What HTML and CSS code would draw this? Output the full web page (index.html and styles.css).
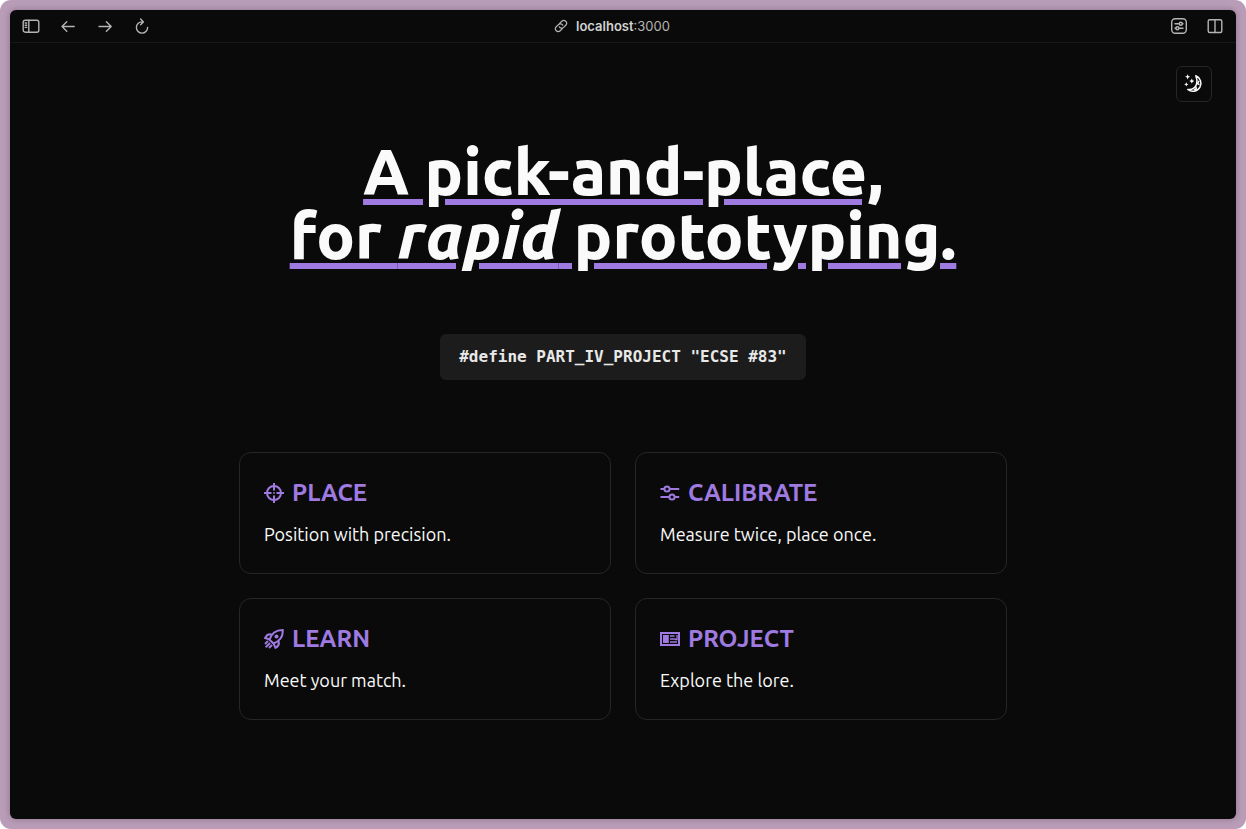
FILE: index.html
```html
<!DOCTYPE html>
<html lang="en">
<head>
<meta charset="utf-8">
<meta name="viewport" content="width=device-width, initial-scale=1">
<title>A pick-and-place, for rapid prototyping.</title>
<link rel="stylesheet" href="styles.css">
</head>
<body>
<div class="window">
  <header class="toolbar">
    <div class="tools">
      <button class="tool" type="button" aria-label="Sidebar">
        <svg width="18" height="18" viewBox="0 0 18 18"><rect x="1.2" y="3.200" width="15.6" height="12" rx="2"/><path d="M6.8 3.200v12M3.200 6h1.500M3.200 8.200h1.500M3.200 10.400h1.500"/></svg>
      </button>
      <button class="tool" type="button" aria-label="Back">
        <svg width="18" height="18" viewBox="0 0 18 18"><path d="M15.200 9.500H3M7.800 4.700 3 9.500l4.800 4.800"/></svg>
      </button>
      <button class="tool" type="button" aria-label="Forward">
        <svg width="18" height="18" viewBox="0 0 18 18"><path d="M3 9.500h12.200M10.400 4.700 15.200 9.500l-4.800 4.800"/></svg>
      </button>
      <button class="tool" type="button" aria-label="Reload">
        <svg width="18" height="18" viewBox="0 0 18 18"><path d="M9.800 4.900H9a5.600 5.600 0 1 0 5.600 5.600M7.600 2 10.400 4.900 7.600 7.700"/></svg>
      </button>
    </div>
    <div class="address">
      <svg width="14" height="14" viewBox="0 0 14 14"><g transform="rotate(-45 7 7)"><path d="M6.500 9.800H3.100a2.800 2.800 0 0 1 0-5.600h3a2.800 2.800 0 0 1 2.700 3.400M7.500 4.200h3.400a2.800 2.800 0 0 1 0 5.600h-3a2.800 2.800 0 0 1-2.700-3.400"/></g></svg>
      <span><b>localhost</b>:3000</span>
    </div>
    <div class="tools tools-end">
      <button class="tool" type="button" aria-label="Page settings">
        <svg width="18" height="18" viewBox="0 0 18 18"><rect x="1.700" y="1.700" width="14.600" height="14.600" rx="3.500"/><path d="M5 6.800h4.200M12.400 6.800H13M5 11.200h.8M9 11.200h4"/><circle cx="10.800" cy="6.800" r="1.500"/><circle cx="7.400" cy="11.200" r="1.500"/></svg>
      </button>
      <button class="tool" type="button" aria-label="Split view">
        <svg width="18" height="18" viewBox="0 0 18 18"><rect x="2.200" y="2.700" width="13.600" height="12.800" rx="1.500"/><path d="M9 2.700v12.800"/></svg>
      </button>
    </div>
  </header>

  <main class="page">
    <div class="topbar">
      <button class="theme" type="button" aria-label="Toggle theme">
        <svg width="20" height="20" viewBox="0 0 20 20">
          <path class="line" d="M11.800 1.800A8 8 0 1 1 3.800 15.400C8 16.200 11.600 13.800 12.600 10c.7-2.800.4-5.600-.8-8.200Z"/>
          <path class="line" d="M15 6.800l-1.500 2.700 2 1.200M11.800 12.500l.5 2.500-2.500.7"/>
          <path class="solid" d="M3.600 .2l.8 1.800 1.800.8-1.800.8L3.600 5.400l-.8-1.800-1.800-.8 1.800-.8ZM7.800 4.600l.8 1.700 1.700.8-1.700.8-.8 1.700-.8-1.700-1.700-.8 1.700-.8ZM2.300 8.200l.7 1.500 1.500.7-1.500.7-.7 1.500-.7-1.500-1.500-.7 1.500-.7Z"/>
        </svg>
      </button>
    </div>
    <h1 class="headline">A pick-and-place,<br>for <em>rapid</em> prototyping.</h1>
    <code class="define">#define PART_IV_PROJECT "ECSE #83"</code>
    <nav class="cards">
      <a class="card" href="#place">
        <h2 class="card-title">
          <svg width="20" height="20" viewBox="0 0 20 20"><circle cx="10" cy="10" r="7"/><path d="M10 0v7.500M10 12.500V20M0 10h7.500M12.500 10H20"/><circle class="solid" cx="10" cy="10" r=".9"/></svg>
          PLACE
        </h2>
        <p class="card-text">Position with precision.</p>
      </a>
      <a class="card" href="#calibrate">
        <h2 class="card-title">
          <svg width="20" height="20" viewBox="0 0 20 20"><path d="M.5 6h4M9.500 6h9.700M.5 14h9M14.500 14h4.700"/><circle cx="7" cy="6" r="2.600"/><circle cx="12" cy="14" r="2.600"/></svg>
          CALIBRATE
        </h2>
        <p class="card-text">Measure twice, place once.</p>
      </a>
      <a class="card" href="#learn">
        <h2 class="card-title">
          <svg width="20" height="20" viewBox="0 0 20 20"><path d="M5.500 10.800C7 5.500 11.500 1.200 18.700 1.100 19.300 8 14.500 12.500 9.500 14.500ZM7.700 5.500C4.500 4.500 2.500 6 1.200 9L5.800 10.500M14.500 12C15.500 15 14 17.500 11.500 18.800L9.500 14.500M4 12 1 15M6 14 1.700 18.300M8 16 5 19"/><circle class="solid" cx="12.500" cy="7.500" r="2"/></svg>
          LEARN
        </h2>
        <p class="card-text">Meet your match.</p>
      </a>
      <a class="card" href="#project">
        <h2 class="card-title">
          <svg width="20" height="20" viewBox="0 0 20 20"><rect x="1" y="4" width="18" height="12"/><path class="solid" d="M3 6h5.800v8H3Z"/><path class="thin" d="M10 7h4.500M10 10h5.500M10 13h7M17 6v4.500h-2"/></svg>
          PROJECT
        </h2>
        <p class="card-text">Explore the lore.</p>
      </a>
    </nav>
  </main>
</div>
</body>
</html>
```
FILE: styles.css
```css
* {
  box-sizing: border-box;
}

html {
  min-height: 100%;
  background: #fff;
}

body {
  margin: 0;
  min-height: 100vh;
  display: flex;
  padding: 10px;
  border-radius: 11px;
  background: #b99db8;
  color: #fafafa;
  font-family: Ubuntu, "Noto Sans", sans-serif;
}

.window {
  flex: 1;
  display: flex;
  flex-direction: column;
  border-radius: 6px;
  background: #0a0a0a;
  box-shadow: 0 0 6px rgba(40, 10, 40, 0.3);
}

.toolbar {
  display: grid;
  grid-template-columns: 1fr auto 1fr;
  align-items: center;
  height: 33px;
  padding: 0 12px;
  border-bottom: 1px solid #171717;
  color: #b4b4b4;
}

.tools {
  display: flex;
  gap: 19px;
}

.tools-end {
  justify-content: flex-end;
  gap: 18px;
}

.tool {
  display: flex;
  padding: 0;
  border: 0;
  background: none;
  color: inherit;
}

.toolbar svg {
  fill: none;
  stroke: currentColor;
  stroke-width: 1.4;
  stroke-linecap: round;
  stroke-linejoin: round;
}

.address {
  display: flex;
  align-items: center;
  gap: 8px;
  margin-right: 22px;
  font: 13px/16px Inter, sans-serif;
}

.address svg {
  stroke-width: 1.2;
}

.address b {
  color: #d2d2d2;
  font-weight: 600;
}

.page {
  display: flex;
  flex-direction: column;
  align-items: center;
  padding: 0 24px 24px;
}

.topbar {
  align-self: stretch;
  display: flex;
  justify-content: flex-end;
  padding: 23px 0;
}

.theme {
  display: flex;
  align-items: center;
  justify-content: center;
  width: 36px;
  height: 36px;
  padding: 0;
  border: 1px solid #262626;
  border-radius: 6px;
  background: transparent;
  color: #fafafa;
}

.line {
  fill: none;
  stroke: currentColor;
  stroke-width: 1.5;
  stroke-linejoin: round;
}

.solid {
  fill: currentColor;
  stroke: none;
}

.headline {
  margin: 14px 0 0;
  font-size: 64px;
  line-height: 64px;
  font-weight: 800;
  text-align: center;
  text-decoration: underline;
  text-decoration-color: #9f7ae1;
  text-decoration-thickness: 6px;
  text-underline-offset: 4px;
}

.define {
  margin-top: 67px;
  padding: 12px 19px;
  border-radius: 6px;
  background: #1c1c1c;
  color: #e8e8e8;
  font: 700 16px/22px "DejaVu Sans Mono", monospace;
}

.cards {
  display: grid;
  grid-template-columns: repeat(2, 1fr);
  gap: 24px;
  width: 100%;
  max-width: 768px;
  margin-top: 72px;
}

.card {
  padding: 24px 24px 25px;
  border: 1px solid #262626;
  border-radius: 12px;
  color: inherit;
  text-decoration: none;
}

.card-title {
  display: flex;
  align-items: center;
  gap: 8px;
  margin: 0 0 11px;
  color: #9f7ae1;
  font-size: 24px;
  line-height: 32px;
  font-weight: 700;
}

.card-title svg {
  fill: none;
  stroke: currentColor;
  stroke-width: 2;
}

.card-title .solid {
  fill: currentColor;
  stroke: none;
}

.card-title .thin {
  stroke-width: 1.3;
}

.card-text {
  margin: 0;
  font-size: 18px;
  line-height: 28px;
}
```
